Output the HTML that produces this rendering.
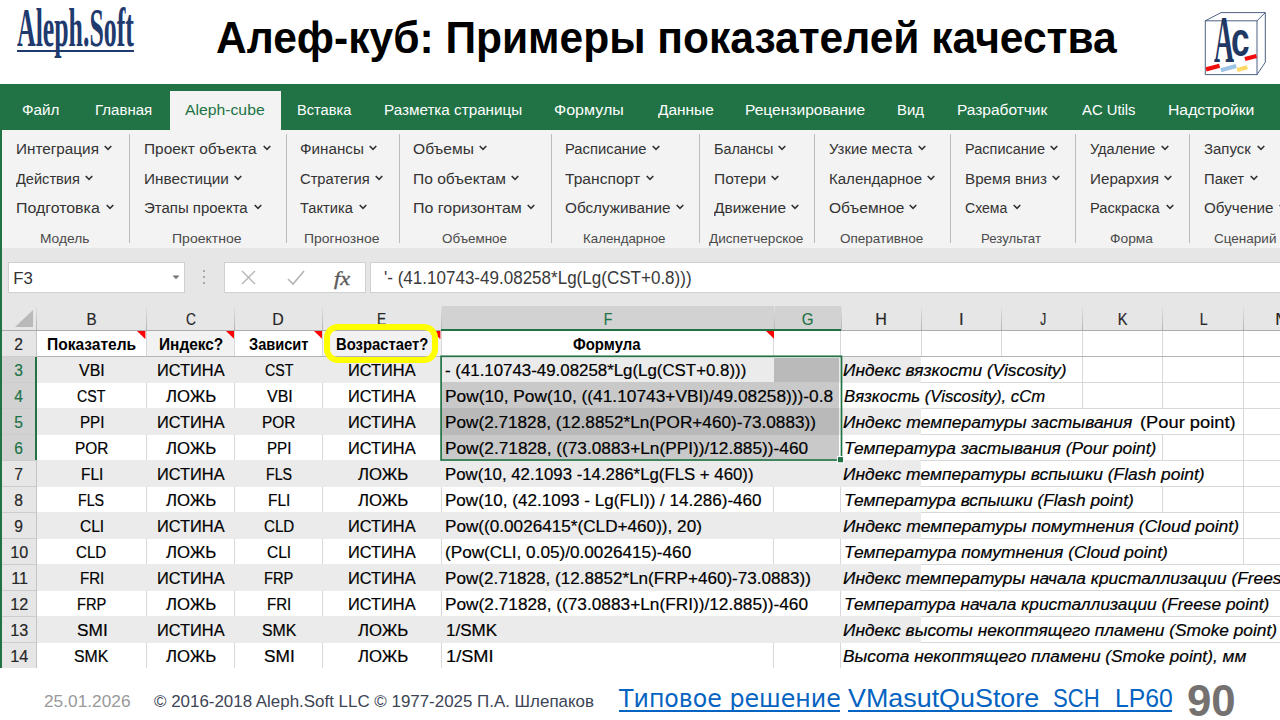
<!DOCTYPE html>
<html lang="ru"><head><meta charset="utf-8"><title>Алеф-куб: Примеры показателей качества</title>
<style>
html,body{margin:0;padding:0;background:#fff}
body{width:1280px;height:720px;position:relative;overflow:hidden;font-family:"Liberation Sans",sans-serif}
#s div,#s span,#s a,#s svg{position:absolute;display:block}
#s{position:absolute;left:0;top:0;width:1280px;height:720px;overflow:hidden}
.t{white-space:nowrap;line-height:1;transform-origin:0 0}
.c{transform-origin:50% 0}
</style></head><body><div id="s">
<div style="left:17px;top:50px;width:117px;height:2px;background:#1f3a6e;"></div>
<svg style="left:1195px;top:5px" width="80" height="78" viewBox="1195 5 80 78">
<g fill="none" stroke="#1f3864" stroke-width="0.8" stroke-linejoin="round">
<rect x="1205.3" y="20.8" width="51.7" height="53.8"/>
<path d="M1205.3 20.8 L1221 12.6 L1265.3 12.6 L1257 20.8 M1265.3 12.6 L1265.3 62.3 L1257 74.6"/>
</g>
<g transform="rotate(-15 1213 67.5)"><rect x="1205.8" y="65.4" width="14" height="4.2" fill="#f20d0d"/></g>
<g transform="rotate(-15 1228.5 68)"><rect x="1220.5" y="66" width="16" height="4.2" fill="#9dc3e6"/></g>
<g transform="rotate(-15 1242.3 68.5)"><rect x="1237" y="66.5" width="10.5" height="4.2" fill="#ffd966"/></g>
<g transform="rotate(-15 1250.7 57.5)"><rect x="1244.7" y="55.4" width="12" height="4.2" fill="#f20d0d"/></g>
</svg>
<div style="left:0px;top:84px;width:1280px;height:46px;background:#217346;"></div>
<div style="left:169.6px;top:91px;width:111.2px;height:39px;background:#f3f3f3;"></div>
<div style="left:0px;top:130px;width:1280px;height:118px;background:#f3f3f3;"></div>
<div style="left:0px;top:248px;width:1280px;height:58px;background:#e6e6e6;"></div>
<div style="left:0px;top:306px;width:1280px;height:362px;background:#fff;"></div>
<div style="left:0px;top:84px;width:2px;height:584px;background:#217346;"></div>
<svg style="left:103.8px;top:145px" width="8" height="6" viewBox="0 0 8 6"><path d="M0.7 1 L4 4.3 L7.3 1" fill="none" stroke="#333" stroke-width="1.6"/></svg>
<svg style="left:84.8px;top:174.5px" width="8" height="6" viewBox="0 0 8 6"><path d="M0.7 1 L4 4.3 L7.3 1" fill="none" stroke="#333" stroke-width="1.6"/></svg>
<svg style="left:105.8px;top:204px" width="8" height="6" viewBox="0 0 8 6"><path d="M0.7 1 L4 4.3 L7.3 1" fill="none" stroke="#333" stroke-width="1.6"/></svg>
<svg style="left:262.8px;top:145px" width="8" height="6" viewBox="0 0 8 6"><path d="M0.7 1 L4 4.3 L7.3 1" fill="none" stroke="#333" stroke-width="1.6"/></svg>
<svg style="left:233.8px;top:174.5px" width="8" height="6" viewBox="0 0 8 6"><path d="M0.7 1 L4 4.3 L7.3 1" fill="none" stroke="#333" stroke-width="1.6"/></svg>
<svg style="left:253.8px;top:204px" width="8" height="6" viewBox="0 0 8 6"><path d="M0.7 1 L4 4.3 L7.3 1" fill="none" stroke="#333" stroke-width="1.6"/></svg>
<svg style="left:368.8px;top:145px" width="8" height="6" viewBox="0 0 8 6"><path d="M0.7 1 L4 4.3 L7.3 1" fill="none" stroke="#333" stroke-width="1.6"/></svg>
<svg style="left:374.8px;top:174.5px" width="8" height="6" viewBox="0 0 8 6"><path d="M0.7 1 L4 4.3 L7.3 1" fill="none" stroke="#333" stroke-width="1.6"/></svg>
<svg style="left:358.8px;top:204px" width="8" height="6" viewBox="0 0 8 6"><path d="M0.7 1 L4 4.3 L7.3 1" fill="none" stroke="#333" stroke-width="1.6"/></svg>
<svg style="left:478.8px;top:145px" width="8" height="6" viewBox="0 0 8 6"><path d="M0.7 1 L4 4.3 L7.3 1" fill="none" stroke="#333" stroke-width="1.6"/></svg>
<svg style="left:510.8px;top:174.5px" width="8" height="6" viewBox="0 0 8 6"><path d="M0.7 1 L4 4.3 L7.3 1" fill="none" stroke="#333" stroke-width="1.6"/></svg>
<svg style="left:526.8px;top:204px" width="8" height="6" viewBox="0 0 8 6"><path d="M0.7 1 L4 4.3 L7.3 1" fill="none" stroke="#333" stroke-width="1.6"/></svg>
<svg style="left:651.8px;top:145px" width="8" height="6" viewBox="0 0 8 6"><path d="M0.7 1 L4 4.3 L7.3 1" fill="none" stroke="#333" stroke-width="1.6"/></svg>
<svg style="left:645.8px;top:174.5px" width="8" height="6" viewBox="0 0 8 6"><path d="M0.7 1 L4 4.3 L7.3 1" fill="none" stroke="#333" stroke-width="1.6"/></svg>
<svg style="left:675.8px;top:204px" width="8" height="6" viewBox="0 0 8 6"><path d="M0.7 1 L4 4.3 L7.3 1" fill="none" stroke="#333" stroke-width="1.6"/></svg>
<svg style="left:777.8px;top:145px" width="8" height="6" viewBox="0 0 8 6"><path d="M0.7 1 L4 4.3 L7.3 1" fill="none" stroke="#333" stroke-width="1.6"/></svg>
<svg style="left:770.8px;top:174.5px" width="8" height="6" viewBox="0 0 8 6"><path d="M0.7 1 L4 4.3 L7.3 1" fill="none" stroke="#333" stroke-width="1.6"/></svg>
<svg style="left:790.8px;top:204px" width="8" height="6" viewBox="0 0 8 6"><path d="M0.7 1 L4 4.3 L7.3 1" fill="none" stroke="#333" stroke-width="1.6"/></svg>
<svg style="left:917.8px;top:145px" width="8" height="6" viewBox="0 0 8 6"><path d="M0.7 1 L4 4.3 L7.3 1" fill="none" stroke="#333" stroke-width="1.6"/></svg>
<svg style="left:926.8px;top:174.5px" width="8" height="6" viewBox="0 0 8 6"><path d="M0.7 1 L4 4.3 L7.3 1" fill="none" stroke="#333" stroke-width="1.6"/></svg>
<svg style="left:909.3px;top:204px" width="8" height="6" viewBox="0 0 8 6"><path d="M0.7 1 L4 4.3 L7.3 1" fill="none" stroke="#333" stroke-width="1.6"/></svg>
<svg style="left:1049.8px;top:145px" width="8" height="6" viewBox="0 0 8 6"><path d="M0.7 1 L4 4.3 L7.3 1" fill="none" stroke="#333" stroke-width="1.6"/></svg>
<svg style="left:1051.8px;top:174.5px" width="8" height="6" viewBox="0 0 8 6"><path d="M0.7 1 L4 4.3 L7.3 1" fill="none" stroke="#333" stroke-width="1.6"/></svg>
<svg style="left:1012.8px;top:204px" width="8" height="6" viewBox="0 0 8 6"><path d="M0.7 1 L4 4.3 L7.3 1" fill="none" stroke="#333" stroke-width="1.6"/></svg>
<svg style="left:1160.8px;top:145px" width="8" height="6" viewBox="0 0 8 6"><path d="M0.7 1 L4 4.3 L7.3 1" fill="none" stroke="#333" stroke-width="1.6"/></svg>
<svg style="left:1163.8px;top:174.5px" width="8" height="6" viewBox="0 0 8 6"><path d="M0.7 1 L4 4.3 L7.3 1" fill="none" stroke="#333" stroke-width="1.6"/></svg>
<svg style="left:1165.8px;top:204px" width="8" height="6" viewBox="0 0 8 6"><path d="M0.7 1 L4 4.3 L7.3 1" fill="none" stroke="#333" stroke-width="1.6"/></svg>
<svg style="left:1256.8px;top:145px" width="8" height="6" viewBox="0 0 8 6"><path d="M0.7 1 L4 4.3 L7.3 1" fill="none" stroke="#333" stroke-width="1.6"/></svg>
<svg style="left:1249.8px;top:174.5px" width="8" height="6" viewBox="0 0 8 6"><path d="M0.7 1 L4 4.3 L7.3 1" fill="none" stroke="#333" stroke-width="1.6"/></svg>
<svg style="left:1278.8px;top:204px" width="8" height="6" viewBox="0 0 8 6"><path d="M0.7 1 L4 4.3 L7.3 1" fill="none" stroke="#333" stroke-width="1.6"/></svg>
<div style="left:128.6px;top:134px;width:1px;height:109px;background:#bcbcbc;"></div>
<div style="left:285.6px;top:134px;width:1px;height:109px;background:#bcbcbc;"></div>
<div style="left:398.6px;top:134px;width:1px;height:109px;background:#bcbcbc;"></div>
<div style="left:550.6px;top:134px;width:1px;height:109px;background:#bcbcbc;"></div>
<div style="left:698.6px;top:134px;width:1px;height:109px;background:#bcbcbc;"></div>
<div style="left:813.6px;top:134px;width:1px;height:109px;background:#bcbcbc;"></div>
<div style="left:949.6px;top:134px;width:1px;height:109px;background:#bcbcbc;"></div>
<div style="left:1075px;top:134px;width:1px;height:109px;background:#bcbcbc;"></div>
<div style="left:1189px;top:134px;width:1px;height:109px;background:#bcbcbc;"></div>
<div style="left:8px;top:262px;width:177px;height:31px;background:#fff;box-sizing:border-box;border:1px solid #d0d0d0"></div>
<div style="left:224px;top:262px;width:141.5px;height:31px;background:#fff;box-sizing:border-box;border:1px solid #d0d0d0"></div>
<div style="left:369.5px;top:262px;width:912px;height:31px;background:#fff;box-sizing:border-box;border:1px solid #d0d0d0"></div>
<svg style="left:172px;top:275px" width="8" height="5" viewBox="0 0 8 5"><path d="M0.5 0.5 L7.5 0.5 L4 4.3 Z" fill="#777"/></svg>
<div style="left:203px;top:270px;width:2px;height:2px;background:#aaa;"></div>
<div style="left:203px;top:276px;width:2px;height:2px;background:#aaa;"></div>
<div style="left:203px;top:282px;width:2px;height:2px;background:#aaa;"></div>
<svg style="left:240px;top:269px" width="18" height="18" viewBox="0 0 18 18"><path d="M2 2 L15 15 M15 2 L2 15" fill="none" stroke="#b4b4b4" stroke-width="1.4"/></svg>
<svg style="left:286px;top:269px" width="20" height="18" viewBox="0 0 20 18"><path d="M2 10 L7 15 L18 2" fill="none" stroke="#b4b4b4" stroke-width="1.6"/></svg>
<div style="left:2px;top:306px;width:1278px;height:24px;background:#e6e6e6;"></div>
<div style="left:441px;top:306px;width:400px;height:24px;background:#d2d2d2;"></div>
<div style="left:2px;top:329.7px;width:1278px;height:1px;background:#ababab;"></div>
<div style="left:145.5px;top:306px;width:1px;height:24px;background:#c4c4c4;background:linear-gradient(#e2e2e2,#b4b4b4)"></div>
<div style="left:234.0px;top:306px;width:1px;height:24px;background:#c4c4c4;background:linear-gradient(#e2e2e2,#b4b4b4)"></div>
<div style="left:322.0px;top:306px;width:1px;height:24px;background:#c4c4c4;background:linear-gradient(#e2e2e2,#b4b4b4)"></div>
<div style="left:440.5px;top:306px;width:1px;height:24px;background:#c4c4c4;background:linear-gradient(#e2e2e2,#b4b4b4)"></div>
<div style="left:774.0px;top:306px;width:1px;height:24px;background:#c4c4c4;background:linear-gradient(#e2e2e2,#b4b4b4)"></div>
<div style="left:840.5px;top:306px;width:1px;height:24px;background:#c4c4c4;background:linear-gradient(#e2e2e2,#b4b4b4)"></div>
<div style="left:920.9px;top:306px;width:1px;height:24px;background:#c4c4c4;background:linear-gradient(#e2e2e2,#b4b4b4)"></div>
<div style="left:1001.0px;top:306px;width:1px;height:24px;background:#c4c4c4;background:linear-gradient(#e2e2e2,#b4b4b4)"></div>
<div style="left:1081.8px;top:306px;width:1px;height:24px;background:#c4c4c4;background:linear-gradient(#e2e2e2,#b4b4b4)"></div>
<div style="left:1162.0px;top:306px;width:1px;height:24px;background:#c4c4c4;background:linear-gradient(#e2e2e2,#b4b4b4)"></div>
<div style="left:1242.7px;top:306px;width:1px;height:24px;background:#c4c4c4;background:linear-gradient(#e2e2e2,#b4b4b4)"></div>
<div style="left:1329.5px;top:306px;width:1px;height:24px;background:#c4c4c4;background:linear-gradient(#e2e2e2,#b4b4b4)"></div>
<div style="left:36.2px;top:306px;width:1px;height:24px;background:#c4c4c4;background:linear-gradient(#e2e2e2,#b4b4b4)"></div>
<svg style="left:14px;top:309px" width="20" height="19" viewBox="0 0 20 19"><path d="M19 1 L19 18 L1 18 Z" fill="#b9b9b9"/></svg>
<div style="left:441px;top:329px;width:400px;height:2px;background:#217346;"></div>
<div style="left:2px;top:331px;width:34.5px;height:337px;background:#e6e6e6;"></div>
<div style="left:2px;top:356.5px;width:33px;height:103.5px;background:#d2d2d2;"></div>
<div style="left:2px;top:355.5px;width:34px;height:1px;background:#cdcdcd;"></div>
<div style="left:2px;top:381.5px;width:34px;height:1px;background:#cdcdcd;"></div>
<div style="left:2px;top:407.5px;width:34px;height:1px;background:#cdcdcd;"></div>
<div style="left:2px;top:433.5px;width:34px;height:1px;background:#cdcdcd;"></div>
<div style="left:2px;top:459.5px;width:34px;height:1px;background:#cdcdcd;"></div>
<div style="left:2px;top:485.5px;width:34px;height:1px;background:#cdcdcd;"></div>
<div style="left:2px;top:511.5px;width:34px;height:1px;background:#cdcdcd;"></div>
<div style="left:2px;top:537.5px;width:34px;height:1px;background:#cdcdcd;"></div>
<div style="left:2px;top:563.5px;width:34px;height:1px;background:#cdcdcd;"></div>
<div style="left:2px;top:589.5px;width:34px;height:1px;background:#cdcdcd;"></div>
<div style="left:2px;top:615.5px;width:34px;height:1px;background:#cdcdcd;"></div>
<div style="left:2px;top:641.5px;width:34px;height:1px;background:#cdcdcd;"></div>
<div style="left:2px;top:667.5px;width:34px;height:1px;background:#cdcdcd;"></div>
<div style="left:36px;top:331px;width:1px;height:337px;background:#c4c4c4;"></div>
<div style="left:35px;top:356.5px;width:1.8px;height:103.5px;background:#217346;"></div>
<div style="left:921px;top:381.5px;width:359px;height:1px;background:#d8d8d8;"></div>
<div style="left:921px;top:407.5px;width:359px;height:1px;background:#d8d8d8;"></div>
<div style="left:921px;top:433.5px;width:359px;height:1px;background:#d8d8d8;"></div>
<div style="left:921px;top:459.5px;width:359px;height:1px;background:#d8d8d8;"></div>
<div style="left:921px;top:485.5px;width:359px;height:1px;background:#d8d8d8;"></div>
<div style="left:921px;top:511.5px;width:359px;height:1px;background:#d8d8d8;"></div>
<div style="left:921px;top:537.5px;width:359px;height:1px;background:#d8d8d8;"></div>
<div style="left:921px;top:563.5px;width:359px;height:1px;background:#d8d8d8;"></div>
<div style="left:921px;top:589.5px;width:359px;height:1px;background:#d8d8d8;"></div>
<div style="left:921px;top:615.5px;width:359px;height:1px;background:#d8d8d8;"></div>
<div style="left:921px;top:641.5px;width:359px;height:1px;background:#d8d8d8;"></div>
<div style="left:36.7px;top:356px;width:884.7px;height:27px;background:#ebebeb;"></div>
<div style="left:36.7px;top:408px;width:884.7px;height:27px;background:#ebebeb;"></div>
<div style="left:36.7px;top:460px;width:884.7px;height:27px;background:#ebebeb;"></div>
<div style="left:36.7px;top:512px;width:884.7px;height:27px;background:#ebebeb;"></div>
<div style="left:36.7px;top:564px;width:884.7px;height:27px;background:#ebebeb;"></div>
<div style="left:36.7px;top:616px;width:884.7px;height:27px;background:#ebebeb;"></div>
<div style="left:146.5px;top:331px;width:87.5px;height:24.5px;background:#f2f2f2;"></div>
<div style="left:323px;top:331px;width:117.5px;height:24.5px;background:#f2f2f2;"></div>
<div style="left:145.5px;top:331px;width:1px;height:24.5px;background:#d8d8d8;"></div>
<div style="left:234.0px;top:331px;width:1px;height:24.5px;background:#d8d8d8;"></div>
<div style="left:322.0px;top:331px;width:1px;height:24.5px;background:#d8d8d8;"></div>
<div style="left:440.5px;top:331px;width:1px;height:24.5px;background:#d8d8d8;"></div>
<div style="left:773.0px;top:331px;width:1px;height:24.5px;background:#d8d8d8;"></div>
<div style="left:840.0px;top:331px;width:1px;height:24.5px;background:#d8d8d8;"></div>
<div style="left:920.9px;top:331px;width:1px;height:24.5px;background:#d8d8d8;"></div>
<div style="left:1001.0px;top:331px;width:1px;height:24.5px;background:#d8d8d8;"></div>
<div style="left:1081.8px;top:331px;width:1px;height:24.5px;background:#d8d8d8;"></div>
<div style="left:1162.0px;top:331px;width:1px;height:24.5px;background:#d8d8d8;"></div>
<div style="left:1242.7px;top:331px;width:1px;height:24.5px;background:#d8d8d8;"></div>
<div style="left:1081.8px;top:356px;width:1px;height:26px;background:#d8d8d8;"></div>
<div style="left:1162.0px;top:356px;width:1px;height:26px;background:#d8d8d8;"></div>
<div style="left:1242.7px;top:356px;width:1px;height:26px;background:#d8d8d8;"></div>
<div style="left:145.5px;top:383px;width:1px;height:25px;background:#d8d8d8;"></div>
<div style="left:234.0px;top:383px;width:1px;height:25px;background:#d8d8d8;"></div>
<div style="left:322.0px;top:383px;width:1px;height:25px;background:#d8d8d8;"></div>
<div style="left:440.5px;top:383px;width:1px;height:25px;background:#d8d8d8;"></div>
<div style="left:1081.8px;top:382px;width:1px;height:26px;background:#d8d8d8;"></div>
<div style="left:1162.0px;top:382px;width:1px;height:26px;background:#d8d8d8;"></div>
<div style="left:1242.7px;top:382px;width:1px;height:26px;background:#d8d8d8;"></div>
<div style="left:1242.7px;top:408px;width:1px;height:26px;background:#d8d8d8;"></div>
<div style="left:145.5px;top:435px;width:1px;height:25px;background:#d8d8d8;"></div>
<div style="left:234.0px;top:435px;width:1px;height:25px;background:#d8d8d8;"></div>
<div style="left:322.0px;top:435px;width:1px;height:25px;background:#d8d8d8;"></div>
<div style="left:440.5px;top:435px;width:1px;height:25px;background:#d8d8d8;"></div>
<div style="left:1162.0px;top:434px;width:1px;height:26px;background:#d8d8d8;"></div>
<div style="left:1242.7px;top:434px;width:1px;height:26px;background:#d8d8d8;"></div>
<div style="left:1242.7px;top:460px;width:1px;height:26px;background:#d8d8d8;"></div>
<div style="left:145.5px;top:487px;width:1px;height:25px;background:#d8d8d8;"></div>
<div style="left:234.0px;top:487px;width:1px;height:25px;background:#d8d8d8;"></div>
<div style="left:322.0px;top:487px;width:1px;height:25px;background:#d8d8d8;"></div>
<div style="left:440.5px;top:487px;width:1px;height:25px;background:#d8d8d8;"></div>
<div style="left:773.0px;top:487px;width:1px;height:25px;background:#d8d8d8;"></div>
<div style="left:840.0px;top:487px;width:1px;height:25px;background:#d8d8d8;"></div>
<div style="left:1162.0px;top:486px;width:1px;height:26px;background:#d8d8d8;"></div>
<div style="left:1242.7px;top:486px;width:1px;height:26px;background:#d8d8d8;"></div>
<div style="left:1242.7px;top:512px;width:1px;height:26px;background:#d8d8d8;"></div>
<div style="left:145.5px;top:539px;width:1px;height:25px;background:#d8d8d8;"></div>
<div style="left:234.0px;top:539px;width:1px;height:25px;background:#d8d8d8;"></div>
<div style="left:322.0px;top:539px;width:1px;height:25px;background:#d8d8d8;"></div>
<div style="left:440.5px;top:539px;width:1px;height:25px;background:#d8d8d8;"></div>
<div style="left:773.0px;top:539px;width:1px;height:25px;background:#d8d8d8;"></div>
<div style="left:840.0px;top:539px;width:1px;height:25px;background:#d8d8d8;"></div>
<div style="left:1242.7px;top:538px;width:1px;height:26px;background:#d8d8d8;"></div>
<div style="left:145.5px;top:591px;width:1px;height:25px;background:#d8d8d8;"></div>
<div style="left:234.0px;top:591px;width:1px;height:25px;background:#d8d8d8;"></div>
<div style="left:322.0px;top:591px;width:1px;height:25px;background:#d8d8d8;"></div>
<div style="left:440.5px;top:591px;width:1px;height:25px;background:#d8d8d8;"></div>
<div style="left:840.0px;top:591px;width:1px;height:25px;background:#d8d8d8;"></div>
<div style="left:145.5px;top:643px;width:1px;height:25px;background:#d8d8d8;"></div>
<div style="left:234.0px;top:643px;width:1px;height:25px;background:#d8d8d8;"></div>
<div style="left:322.0px;top:643px;width:1px;height:25px;background:#d8d8d8;"></div>
<div style="left:440.5px;top:643px;width:1px;height:25px;background:#d8d8d8;"></div>
<div style="left:773.0px;top:643px;width:1px;height:25px;background:#d8d8d8;"></div>
<div style="left:840.0px;top:643px;width:1px;height:25px;background:#d8d8d8;"></div>
<div style="left:36.7px;top:355.7px;width:1244px;height:1px;background:#b4b4b4;"></div>
<div style="left:441px;top:382px;width:398px;height:26px;background:#c9c9c9;"></div>
<div style="left:441px;top:408px;width:398px;height:27px;background:#b9b9b9;"></div>
<div style="left:441px;top:435px;width:398px;height:24px;background:#c9c9c9;"></div>
<div style="left:774px;top:358px;width:65px;height:24px;background:#bababa;"></div>
<svg style="left:436px;top:352px" width="412" height="114" viewBox="436 352 412 114"><rect x="441.1" y="356.3" width="400.4" height="103.7" fill="none" stroke="#217346" stroke-width="1.7"/><rect x="837.4" y="456.6" width="6.2" height="6.2" fill="#217346" stroke="#fff" stroke-width="1"/></svg>
<svg style="left:137.4px;top:330.6px" width="8.4" height="8.2" viewBox="0 0 8.4 8.2"><path d="M0 0 L8.4 0 L8.4 8.2 Z" fill="#ff0000"/></svg>
<svg style="left:225.9px;top:330.6px" width="8.4" height="8.2" viewBox="0 0 8.4 8.2"><path d="M0 0 L8.4 0 L8.4 8.2 Z" fill="#ff0000"/></svg>
<svg style="left:313.8px;top:330.6px" width="8.4" height="8.2" viewBox="0 0 8.4 8.2"><path d="M0 0 L8.4 0 L8.4 8.2 Z" fill="#ff0000"/></svg>
<svg style="left:432.20000000000005px;top:330.6px" width="8.4" height="8.2" viewBox="0 0 8.4 8.2"><path d="M0 0 L8.4 0 L8.4 8.2 Z" fill="#ff0000"/></svg>
<svg style="left:765.5px;top:330.6px" width="8.4" height="8.2" viewBox="0 0 8.4 8.2"><path d="M0 0 L8.4 0 L8.4 8.2 Z" fill="#ff0000"/></svg>
<div style="left:0px;top:668px;width:1280px;height:52px;background:#fff;"></div>
<div style="left:619px;top:710px;width:221px;height:1.6px;background:#0563c1;"></div>
<div style="left:848px;top:710px;width:324px;height:1.6px;background:#0563c1;"></div>
<span class="t" style="font:700 55px 'Liberation Serif', serif;line-height:1;color:#1f3a6e;left:16.87px;top:-0.4px;transform:scaleX(0.4693);">Aleph.Soft</span>
<span class="t" style="font:700 42.6px 'Liberation Sans', sans-serif;line-height:1;color:#000;left:216.00px;top:16.8px;transform-origin:0 36.00px;transform:scale(0.9986,1.06);">Алеф-куб: Примеры показателей качества</span>
<span class="t" style="font:700 68.2px 'Liberation Serif', serif;line-height:1;color:#1f3864;left:1214.20px;top:5px;transform:scaleX(0.4062);">A</span>
<span class="t" style="font:700 49px 'Liberation Sans', sans-serif;line-height:1;color:#1f3864;left:1230.94px;top:15px;transform:scaleX(0.6821);">c</span>
<span class="t" style="font:400 15.1px 'Liberation Sans', sans-serif;line-height:1;color:#fff;left:21.74px;top:102px;transform:scaleX(1.0071);">Файл</span>
<span class="t" style="font:400 15.1px 'Liberation Sans', sans-serif;line-height:1;color:#fff;left:94.76px;top:102px;transform:scaleX(0.9955);">Главная</span>
<span class="t" style="font:400 15.1px 'Liberation Sans', sans-serif;line-height:1;color:#217346;left:185.00px;top:102px;transform:scaleX(1.0429);">Aleph-cube</span>
<span class="t" style="font:400 15.1px 'Liberation Sans', sans-serif;line-height:1;color:#fff;left:296.79px;top:102px;transform:scaleX(0.9680);">Вставка</span>
<span class="t" style="font:400 15.1px 'Liberation Sans', sans-serif;line-height:1;color:#fff;left:383.74px;top:102px;transform:scaleX(1.0093);">Разметка страницы</span>
<span class="t" style="font:400 15.1px 'Liberation Sans', sans-serif;line-height:1;color:#fff;left:554.20px;top:102px;transform:scaleX(1.0625);">Формулы</span>
<span class="t" style="font:400 15.1px 'Liberation Sans', sans-serif;line-height:1;color:#fff;left:657.50px;top:102px;transform:scaleX(1.0233);">Данные</span>
<span class="t" style="font:400 15.1px 'Liberation Sans', sans-serif;line-height:1;color:#fff;left:744.71px;top:102px;transform:scaleX(1.0306);">Рецензирование</span>
<span class="t" style="font:400 15.1px 'Liberation Sans', sans-serif;line-height:1;color:#fff;left:897.26px;top:102px;transform:scaleX(0.9903);">Вид</span>
<span class="t" style="font:400 15.1px 'Liberation Sans', sans-serif;line-height:1;color:#fff;left:957.22px;top:102px;transform:scaleX(1.0259);">Разработчик</span>
<span class="t" style="font:400 15.1px 'Liberation Sans', sans-serif;line-height:1;color:#fff;left:1082.00px;top:102px;transform:scaleX(0.9815);">AC Utils</span>
<span class="t" style="font:400 15.1px 'Liberation Sans', sans-serif;line-height:1;color:#fff;left:1168.20px;top:102px;transform:scaleX(1.0435);">Надстройки</span>
<span class="t" style="font:400 15.2px 'Liberation Sans', sans-serif;line-height:1;color:#333;left:16.30px;top:141px;transform:scaleX(1.0068);">Интеграция</span>
<span class="t" style="font:400 15.2px 'Liberation Sans', sans-serif;line-height:1;color:#333;left:16.30px;top:170.5px;transform:scaleX(0.9588);">Действия</span>
<span class="t" style="font:400 15.2px 'Liberation Sans', sans-serif;line-height:1;color:#333;left:16.30px;top:200px;transform:scaleX(1.0475);">Подготовка</span>
<span class="t" style="font:400 15.2px 'Liberation Sans', sans-serif;line-height:1;color:#333;left:144.30px;top:141px;transform:scaleX(1.0162);">Проект объекта</span>
<span class="t" style="font:400 15.2px 'Liberation Sans', sans-serif;line-height:1;color:#333;left:144.30px;top:170.5px;transform:scaleX(1.0066);">Инвестиции</span>
<span class="t" style="font:400 15.2px 'Liberation Sans', sans-serif;line-height:1;color:#333;left:144.30px;top:200px;transform:scaleX(0.9862);">Этапы проекта</span>
<span class="t" style="font:400 15.2px 'Liberation Sans', sans-serif;line-height:1;color:#333;left:300.30px;top:141px;transform:scaleX(1.0008);">Финансы</span>
<span class="t" style="font:400 15.2px 'Liberation Sans', sans-serif;line-height:1;color:#333;left:300.30px;top:170.5px;transform:scaleX(0.9690);">Стратегия</span>
<span class="t" style="font:400 15.2px 'Liberation Sans', sans-serif;line-height:1;color:#333;left:300.30px;top:200px;transform:scaleX(0.9644);">Тактика</span>
<span class="t" style="font:400 15.2px 'Liberation Sans', sans-serif;line-height:1;color:#333;left:413.30px;top:141px;transform:scaleX(1.0266);">Объемы</span>
<span class="t" style="font:400 15.2px 'Liberation Sans', sans-serif;line-height:1;color:#333;left:413.30px;top:170.5px;transform:scaleX(1.0257);">По объектам</span>
<span class="t" style="font:400 15.2px 'Liberation Sans', sans-serif;line-height:1;color:#333;left:413.30px;top:200px;transform:scaleX(1.0517);">По горизонтам</span>
<span class="t" style="font:400 15.2px 'Liberation Sans', sans-serif;line-height:1;color:#333;left:565.30px;top:141px;transform:scaleX(0.9735);">Расписание</span>
<span class="t" style="font:400 15.2px 'Liberation Sans', sans-serif;line-height:1;color:#333;left:565.30px;top:170.5px;transform:scaleX(1.0282);">Транспорт</span>
<span class="t" style="font:400 15.2px 'Liberation Sans', sans-serif;line-height:1;color:#333;left:565.30px;top:200px;transform:scaleX(1.0053);">Обслуживание</span>
<span class="t" style="font:400 15.2px 'Liberation Sans', sans-serif;line-height:1;color:#333;left:713.80px;top:141px;transform:scaleX(0.9480);">Балансы</span>
<span class="t" style="font:400 15.2px 'Liberation Sans', sans-serif;line-height:1;color:#333;left:713.80px;top:170.5px;transform:scaleX(1.0209);">Потери</span>
<span class="t" style="font:400 15.2px 'Liberation Sans', sans-serif;line-height:1;color:#333;left:713.80px;top:200px;transform:scaleX(1.0186);">Движение</span>
<span class="t" style="font:400 15.2px 'Liberation Sans', sans-serif;line-height:1;color:#333;left:828.80px;top:141px;transform:scaleX(0.9771);">Узкие места</span>
<span class="t" style="font:400 15.2px 'Liberation Sans', sans-serif;line-height:1;color:#333;left:828.80px;top:170.5px;transform:scaleX(0.9898);">Календарное</span>
<span class="t" style="font:400 15.2px 'Liberation Sans', sans-serif;line-height:1;color:#333;left:828.80px;top:200px;transform:scaleX(1.0247);">Объемное</span>
<span class="t" style="font:400 15.2px 'Liberation Sans', sans-serif;line-height:1;color:#333;left:964.80px;top:141px;transform:scaleX(0.9554);">Расписание</span>
<span class="t" style="font:400 15.2px 'Liberation Sans', sans-serif;line-height:1;color:#333;left:964.80px;top:170.5px;transform:scaleX(1.0006);">Время вниз</span>
<span class="t" style="font:400 15.2px 'Liberation Sans', sans-serif;line-height:1;color:#333;left:964.80px;top:200px;transform:scaleX(0.9246);">Схема</span>
<span class="t" style="font:400 15.2px 'Liberation Sans', sans-serif;line-height:1;color:#333;left:1090.30px;top:141px;transform:scaleX(0.9565);">Удаление</span>
<span class="t" style="font:400 15.2px 'Liberation Sans', sans-serif;line-height:1;color:#333;left:1090.30px;top:170.5px;transform:scaleX(1.0007);">Иерархия</span>
<span class="t" style="font:400 15.2px 'Liberation Sans', sans-serif;line-height:1;color:#333;left:1090.30px;top:200px;transform:scaleX(0.9661);">Раскраска</span>
<span class="t" style="font:400 15.2px 'Liberation Sans', sans-serif;line-height:1;color:#333;left:1204.30px;top:141px;transform:scaleX(0.9853);">Запуск</span>
<span class="t" style="font:400 15.2px 'Liberation Sans', sans-serif;line-height:1;color:#333;left:1204.30px;top:170.5px;transform:scaleX(0.9767);">Пакет</span>
<span class="t" style="font:400 15.2px 'Liberation Sans', sans-serif;line-height:1;color:#333;left:1204.30px;top:200px;transform:scaleX(1.0007);">Обучение</span>
<span class="t" style="font:400 13.4px 'Liberation Sans', sans-serif;line-height:1;color:#4a4a4a;left:40.37px;top:232.4px;transform:scaleX(1.0280);">Модель</span>
<span class="t" style="font:400 13.4px 'Liberation Sans', sans-serif;line-height:1;color:#4a4a4a;left:172.35px;top:232.4px;transform:scaleX(1.0471);">Проектное</span>
<span class="t" style="font:400 13.4px 'Liberation Sans', sans-serif;line-height:1;color:#4a4a4a;left:304.36px;top:232.4px;transform:scaleX(1.0394);">Прогнозное</span>
<span class="t" style="font:400 13.4px 'Liberation Sans', sans-serif;line-height:1;color:#4a4a4a;left:441.90px;top:232.4px;transform:scaleX(1.0008);">Объемное</span>
<span class="t" style="font:400 13.4px 'Liberation Sans', sans-serif;line-height:1;color:#4a4a4a;left:583.41px;top:232.4px;transform:scaleX(0.9945);">Календарное</span>
<span class="t" style="font:400 13.4px 'Liberation Sans', sans-serif;line-height:1;color:#4a4a4a;left:709.40px;top:232.4px;transform:scaleX(1.0141);">Диспетчерское</span>
<span class="t" style="font:400 13.4px 'Liberation Sans', sans-serif;line-height:1;color:#4a4a4a;left:839.90px;top:232.4px;transform:scaleX(1.0067);">Оперативное</span>
<span class="t" style="font:400 13.4px 'Liberation Sans', sans-serif;line-height:1;color:#4a4a4a;left:981.42px;top:232.4px;transform:scaleX(0.9841);">Результат</span>
<span class="t" style="font:400 13.4px 'Liberation Sans', sans-serif;line-height:1;color:#4a4a4a;left:1109.63px;top:232.4px;transform:scaleX(1.0317);">Форма</span>
<span class="t" style="font:400 13.4px 'Liberation Sans', sans-serif;line-height:1;color:#4a4a4a;left:1213.64px;top:232.4px;transform:scaleX(1.0091);">Сценарий</span>
<span class="t" style="font:400 16.8px 'Liberation Sans', sans-serif;line-height:1;color:#333;left:13.25px;top:271px;">F3</span>
<span class="t" style="font:italic 400 19px 'Liberation Serif', serif;line-height:1;color:#5a5a5a;-webkit-text-stroke:0.35px #5a5a5a;left:333.71px;top:268.5px;transform:scaleX(1.1698);">fx</span>
<span class="t" style="font:400 16.8px 'Liberation Sans', sans-serif;line-height:1;color:#3a3a3a;left:383.54px;top:271.2px;transform-origin:0 13.00px;transform:scale(1.0148,1.05);">&#x27;- (41.10743-49.08258*Lg(Lg(CST+0.8)))</span>
<span class="t c" style="font:400 16.8px 'Liberation Sans', sans-serif;line-height:1;color:#262626;-webkit-text-stroke:0.2px #262626;left:85.86px;top:312.2px;transform:scaleX(0.9064);">B</span>
<span class="t c" style="font:400 16.8px 'Liberation Sans', sans-serif;line-height:1;color:#262626;-webkit-text-stroke:0.2px #262626;left:185.19px;top:312.2px;transform:scaleX(0.8204);">C</span>
<span class="t c" style="font:400 16.8px 'Liberation Sans', sans-serif;line-height:1;color:#262626;-webkit-text-stroke:0.2px #262626;left:272.26px;top:312.2px;transform:scaleX(0.9466);">D</span>
<span class="t c" style="font:400 16.8px 'Liberation Sans', sans-serif;line-height:1;color:#262626;-webkit-text-stroke:0.2px #262626;left:375.98px;top:312.2px;transform:scaleX(0.8131);">E</span>
<span class="t c" style="font:400 16.8px 'Liberation Sans', sans-serif;line-height:1;color:#217346;-webkit-text-stroke:0.2px #217346;left:602.66px;top:312.2px;transform:scaleX(0.8348);">F</span>
<span class="t c" style="font:400 16.8px 'Liberation Sans', sans-serif;line-height:1;color:#217346;-webkit-text-stroke:0.2px #217346;left:800.92px;top:312.2px;transform:scaleX(0.9013);">G</span>
<span class="t c" style="font:400 16.8px 'Liberation Sans', sans-serif;line-height:1;color:#262626;-webkit-text-stroke:0.2px #262626;left:874.60px;top:312.2px;transform:scaleX(0.9589);">H</span>
<span class="t c" style="font:400 16.8px 'Liberation Sans', sans-serif;line-height:1;color:#262626;-webkit-text-stroke:0.2px #262626;left:959.02px;top:312.2px;transform:scaleX(1.0074);">I</span>
<span class="t c" style="font:400 16.8px 'Liberation Sans', sans-serif;line-height:1;color:#262626;-webkit-text-stroke:0.2px #262626;left:1038.92px;top:312.2px;transform:scaleX(0.7090);">J</span>
<span class="t c" style="font:400 16.8px 'Liberation Sans', sans-serif;line-height:1;color:#262626;-webkit-text-stroke:0.2px #262626;left:1116.54px;top:312.2px;transform:scaleX(0.8664);">K</span>
<span class="t c" style="font:400 16.8px 'Liberation Sans', sans-serif;line-height:1;color:#262626;-webkit-text-stroke:0.2px #262626;left:1198.75px;top:312.2px;transform:scaleX(0.8395);">L</span>
<span class="t" style="font:400 16.8px 'Liberation Sans', sans-serif;line-height:1;color:#262626;left:1275.07px;top:312.2px;transform:scaleX(1.1407);">M</span>
<span class="t c" style="font:400 16.8px 'Liberation Sans', sans-serif;line-height:1;color:#262626;-webkit-text-stroke:0.2px #262626;left:14.07px;top:336.8px;transform:scaleX(0.9300);">2</span>
<span class="t c" style="font:400 16.8px 'Liberation Sans', sans-serif;line-height:1;color:#217346;-webkit-text-stroke:0.2px #217346;left:14.07px;top:362.8px;transform:scaleX(0.9300);">3</span>
<span class="t c" style="font:400 16.8px 'Liberation Sans', sans-serif;line-height:1;color:#217346;-webkit-text-stroke:0.2px #217346;left:14.19px;top:388.8px;transform:scaleX(0.9300);">4</span>
<span class="t c" style="font:400 16.8px 'Liberation Sans', sans-serif;line-height:1;color:#217346;-webkit-text-stroke:0.2px #217346;left:13.96px;top:414.8px;transform:scaleX(0.9300);">5</span>
<span class="t c" style="font:400 16.8px 'Liberation Sans', sans-serif;line-height:1;color:#217346;-webkit-text-stroke:0.2px #217346;left:14.07px;top:440.8px;transform:scaleX(0.9300);">6</span>
<span class="t c" style="font:400 16.8px 'Liberation Sans', sans-serif;line-height:1;color:#262626;-webkit-text-stroke:0.2px #262626;left:14.07px;top:466.8px;transform:scaleX(0.9300);">7</span>
<span class="t c" style="font:400 16.8px 'Liberation Sans', sans-serif;line-height:1;color:#262626;-webkit-text-stroke:0.2px #262626;left:14.07px;top:492.8px;transform:scaleX(0.9300);">8</span>
<span class="t c" style="font:400 16.8px 'Liberation Sans', sans-serif;line-height:1;color:#262626;-webkit-text-stroke:0.2px #262626;left:14.07px;top:518.8px;transform:scaleX(0.9300);">9</span>
<span class="t c" style="font:400 16.8px 'Liberation Sans', sans-serif;line-height:1;color:#262626;-webkit-text-stroke:0.2px #262626;left:9.79px;top:544.8px;transform:scaleX(0.9650);">10</span>
<span class="t c" style="font:400 16.8px 'Liberation Sans', sans-serif;line-height:1;color:#262626;-webkit-text-stroke:0.2px #262626;left:10.53px;top:570.8px;transform:scaleX(0.9650);">11</span>
<span class="t c" style="font:400 16.8px 'Liberation Sans', sans-serif;line-height:1;color:#262626;-webkit-text-stroke:0.2px #262626;left:9.91px;top:596.8px;transform:scaleX(0.9650);">12</span>
<span class="t c" style="font:400 16.8px 'Liberation Sans', sans-serif;line-height:1;color:#262626;-webkit-text-stroke:0.2px #262626;left:9.79px;top:622.8px;transform:scaleX(0.9650);">13</span>
<span class="t c" style="font:400 16.8px 'Liberation Sans', sans-serif;line-height:1;color:#262626;-webkit-text-stroke:0.2px #262626;left:9.66px;top:648.8px;transform:scaleX(0.9650);">14</span>
<span class="t" style="font:700 15.6px 'Liberation Sans', sans-serif;line-height:1;color:#000;left:46.80px;top:336.8px;transform:scaleX(0.9972);">Показатель</span>
<span class="t" style="font:700 15.6px 'Liberation Sans', sans-serif;line-height:1;color:#000;left:158.51px;top:336.8px;transform:scaleX(0.9881);">Индекс?</span>
<span class="t" style="font:700 15.6px 'Liberation Sans', sans-serif;line-height:1;color:#000;left:248.53px;top:336.8px;transform:scaleX(0.9360);">Зависит</span>
<span class="t" style="font:700 15.6px 'Liberation Sans', sans-serif;line-height:1;color:#000;left:336.05px;top:336.8px;transform:scaleX(0.9501);">Возрастает?</span>
<span class="t" style="font:700 15.6px 'Liberation Sans', sans-serif;line-height:1;color:#000;left:573.27px;top:336.8px;transform:scaleX(0.9573);">Формула</span>
<span class="t" style="font:400 16.8px 'Liberation Sans', sans-serif;line-height:1;color:#000;-webkit-text-stroke:0.2px #000;left:79.47px;top:362.7px;transform:scaleX(0.9510);">VBI</span>
<span class="t" style="font:400 16.8px 'Liberation Sans', sans-serif;line-height:1;color:#000;-webkit-text-stroke:0.2px #000;left:156.58px;top:362.7px;transform:scaleX(0.9765);">ИСТИНА</span>
<span class="t" style="font:400 16.8px 'Liberation Sans', sans-serif;line-height:1;color:#000;-webkit-text-stroke:0.2px #000;left:264.52px;top:362.7px;transform:scaleX(0.8462);">CST</span>
<span class="t" style="font:400 16.8px 'Liberation Sans', sans-serif;line-height:1;color:#000;-webkit-text-stroke:0.2px #000;left:347.88px;top:362.7px;transform:scaleX(0.9765);">ИСТИНА</span>
<span class="t" style="font:400 16.8px 'Liberation Sans', sans-serif;line-height:1;color:#000;-webkit-text-stroke:0.2px #000;left:444.65px;top:362.7px;transform:scaleX(1.0045);">- (41.10743-49.08258*Lg(Lg(CST+0.8)))</span>
<span class="t" style="font:italic 400 16.8px 'Liberation Sans', sans-serif;line-height:1;color:#000;-webkit-text-stroke:0.2px #000;left:843.48px;top:362.7px;transform:scaleX(1.0326);">Индекс вязкости (Viscosity)</span>
<span class="t" style="font:400 16.8px 'Liberation Sans', sans-serif;line-height:1;color:#000;-webkit-text-stroke:0.2px #000;left:77.22px;top:388.7px;transform:scaleX(0.8462);">CST</span>
<span class="t" style="font:400 16.8px 'Liberation Sans', sans-serif;line-height:1;color:#000;-webkit-text-stroke:0.2px #000;left:166.40px;top:388.7px;transform:scaleX(0.9990);">ЛОЖЬ</span>
<span class="t" style="font:400 16.8px 'Liberation Sans', sans-serif;line-height:1;color:#000;-webkit-text-stroke:0.2px #000;left:266.77px;top:388.7px;transform:scaleX(0.9510);">VBI</span>
<span class="t" style="font:400 16.8px 'Liberation Sans', sans-serif;line-height:1;color:#000;-webkit-text-stroke:0.2px #000;left:347.88px;top:388.7px;transform:scaleX(0.9765);">ИСТИНА</span>
<span class="t" style="font:400 16.8px 'Liberation Sans', sans-serif;line-height:1;color:#000;-webkit-text-stroke:0.2px #000;left:445.01px;top:388.7px;transform:scaleX(1.0312);">Pow(10, Pow(10, ((41.10743+VBI)/49.08258)))-0.8</span>
<span class="t" style="font:italic 400 16.8px 'Liberation Sans', sans-serif;line-height:1;color:#000;-webkit-text-stroke:0.2px #000;left:843.50px;top:388.7px;transform:scaleX(0.9963);">Вязкость (Viscosity), cCm</span>
<span class="t" style="font:400 16.8px 'Liberation Sans', sans-serif;line-height:1;color:#000;-webkit-text-stroke:0.2px #000;left:79.52px;top:414.7px;transform:scaleX(0.9031);">PPI</span>
<span class="t" style="font:400 16.8px 'Liberation Sans', sans-serif;line-height:1;color:#000;-webkit-text-stroke:0.2px #000;left:156.58px;top:414.7px;transform:scaleX(0.9765);">ИСТИНА</span>
<span class="t" style="font:400 16.8px 'Liberation Sans', sans-serif;line-height:1;color:#000;-webkit-text-stroke:0.2px #000;left:262.05px;top:414.7px;transform:scaleX(0.9168);">POR</span>
<span class="t" style="font:400 16.8px 'Liberation Sans', sans-serif;line-height:1;color:#000;-webkit-text-stroke:0.2px #000;left:347.88px;top:414.7px;transform:scaleX(0.9765);">ИСТИНА</span>
<span class="t" style="font:400 16.8px 'Liberation Sans', sans-serif;line-height:1;color:#000;-webkit-text-stroke:0.2px #000;left:445.02px;top:414.7px;transform:scaleX(1.0235);">Pow(2.71828, (12.8852*Ln(POR+460)-73.0883))</span>
<span class="t" style="font:italic 400 16.8px 'Liberation Sans', sans-serif;line-height:1;color:#000;-webkit-text-stroke:0.2px #000;left:843.48px;top:414.7px;transform:scaleX(1.0415);">Индекс температуры застывания</span>
<span class="t" style="font:400 16.8px 'Liberation Sans', sans-serif;line-height:1;color:#000;-webkit-text-stroke:0.2px #000;left:74.75px;top:440.7px;transform:scaleX(0.9168);">POR</span>
<span class="t" style="font:400 16.8px 'Liberation Sans', sans-serif;line-height:1;color:#000;-webkit-text-stroke:0.2px #000;left:166.40px;top:440.7px;transform:scaleX(0.9990);">ЛОЖЬ</span>
<span class="t" style="font:400 16.8px 'Liberation Sans', sans-serif;line-height:1;color:#000;-webkit-text-stroke:0.2px #000;left:266.82px;top:440.7px;transform:scaleX(0.9031);">PPI</span>
<span class="t" style="font:400 16.8px 'Liberation Sans', sans-serif;line-height:1;color:#000;-webkit-text-stroke:0.2px #000;left:347.88px;top:440.7px;transform:scaleX(0.9765);">ИСТИНА</span>
<span class="t" style="font:400 16.8px 'Liberation Sans', sans-serif;line-height:1;color:#000;-webkit-text-stroke:0.2px #000;left:445.01px;top:440.7px;transform:scaleX(1.0283);">Pow(2.71828, ((73.0883+Ln(PPI))/12.885))-460</span>
<span class="t" style="font:italic 400 16.8px 'Liberation Sans', sans-serif;line-height:1;color:#000;-webkit-text-stroke:0.2px #000;left:843.65px;top:440.7px;transform:scaleX(1.0335);">Температура застывания (Pour point)</span>
<span class="t" style="font:400 16.8px 'Liberation Sans', sans-serif;line-height:1;color:#000;-webkit-text-stroke:0.2px #000;left:80.60px;top:466.7px;transform:scaleX(0.9163);">FLI</span>
<span class="t" style="font:400 16.8px 'Liberation Sans', sans-serif;line-height:1;color:#000;-webkit-text-stroke:0.2px #000;left:156.58px;top:466.7px;transform:scaleX(0.9765);">ИСТИНА</span>
<span class="t" style="font:400 16.8px 'Liberation Sans', sans-serif;line-height:1;color:#000;-webkit-text-stroke:0.2px #000;left:265.64px;top:466.7px;transform:scaleX(0.8487);">FLS</span>
<span class="t" style="font:400 16.8px 'Liberation Sans', sans-serif;line-height:1;color:#000;-webkit-text-stroke:0.2px #000;left:357.70px;top:466.7px;transform:scaleX(0.9990);">ЛОЖЬ</span>
<span class="t" style="font:400 16.8px 'Liberation Sans', sans-serif;line-height:1;color:#000;-webkit-text-stroke:0.2px #000;left:445.05px;top:466.7px;transform:scaleX(1.0007);">Pow(10, 42.1093 -14.286*Lg(FLS + 460))</span>
<span class="t" style="font:italic 400 16.8px 'Liberation Sans', sans-serif;line-height:1;color:#000;-webkit-text-stroke:0.2px #000;left:843.48px;top:466.7px;transform:scaleX(1.0382);">Индекс температуры вспышки (Flash point)</span>
<span class="t" style="font:400 16.8px 'Liberation Sans', sans-serif;line-height:1;color:#000;-webkit-text-stroke:0.2px #000;left:78.34px;top:492.7px;transform:scaleX(0.8487);">FLS</span>
<span class="t" style="font:400 16.8px 'Liberation Sans', sans-serif;line-height:1;color:#000;-webkit-text-stroke:0.2px #000;left:166.40px;top:492.7px;transform:scaleX(0.9990);">ЛОЖЬ</span>
<span class="t" style="font:400 16.8px 'Liberation Sans', sans-serif;line-height:1;color:#000;-webkit-text-stroke:0.2px #000;left:267.90px;top:492.7px;transform:scaleX(0.9163);">FLI</span>
<span class="t" style="font:400 16.8px 'Liberation Sans', sans-serif;line-height:1;color:#000;-webkit-text-stroke:0.2px #000;left:357.70px;top:492.7px;transform:scaleX(0.9990);">ЛОЖЬ</span>
<span class="t" style="font:400 16.8px 'Liberation Sans', sans-serif;line-height:1;color:#000;-webkit-text-stroke:0.2px #000;left:445.03px;top:492.7px;transform:scaleX(1.0160);">Pow(10, (42.1093 - Lg(FLI)) / 14.286)-460</span>
<span class="t" style="font:italic 400 16.8px 'Liberation Sans', sans-serif;line-height:1;color:#000;-webkit-text-stroke:0.2px #000;left:843.65px;top:492.7px;transform:scaleX(1.0335);">Температура вспышки (Flash point)</span>
<span class="t" style="font:400 16.8px 'Liberation Sans', sans-serif;line-height:1;color:#000;-webkit-text-stroke:0.2px #000;left:79.91px;top:518.7px;transform:scaleX(0.9263);">CLI</span>
<span class="t" style="font:400 16.8px 'Liberation Sans', sans-serif;line-height:1;color:#000;-webkit-text-stroke:0.2px #000;left:156.58px;top:518.7px;transform:scaleX(0.9765);">ИСТИНА</span>
<span class="t" style="font:400 16.8px 'Liberation Sans', sans-serif;line-height:1;color:#000;-webkit-text-stroke:0.2px #000;left:263.77px;top:518.7px;transform:scaleX(0.9031);">CLD</span>
<span class="t" style="font:400 16.8px 'Liberation Sans', sans-serif;line-height:1;color:#000;-webkit-text-stroke:0.2px #000;left:347.88px;top:518.7px;transform:scaleX(0.9765);">ИСТИНА</span>
<span class="t" style="font:400 16.8px 'Liberation Sans', sans-serif;line-height:1;color:#000;-webkit-text-stroke:0.2px #000;left:445.02px;top:518.7px;transform:scaleX(1.0219);">Pow((0.0026415*(CLD+460)), 20)</span>
<span class="t" style="font:italic 400 16.8px 'Liberation Sans', sans-serif;line-height:1;color:#000;-webkit-text-stroke:0.2px #000;left:843.48px;top:518.7px;transform:scaleX(1.0423);">Индекс температуры помутнения (Cloud point)</span>
<span class="t" style="font:400 16.8px 'Liberation Sans', sans-serif;line-height:1;color:#000;-webkit-text-stroke:0.2px #000;left:76.47px;top:544.7px;transform:scaleX(0.9031);">CLD</span>
<span class="t" style="font:400 16.8px 'Liberation Sans', sans-serif;line-height:1;color:#000;-webkit-text-stroke:0.2px #000;left:166.40px;top:544.7px;transform:scaleX(0.9990);">ЛОЖЬ</span>
<span class="t" style="font:400 16.8px 'Liberation Sans', sans-serif;line-height:1;color:#000;-webkit-text-stroke:0.2px #000;left:267.21px;top:544.7px;transform:scaleX(0.9263);">CLI</span>
<span class="t" style="font:400 16.8px 'Liberation Sans', sans-serif;line-height:1;color:#000;-webkit-text-stroke:0.2px #000;left:347.88px;top:544.7px;transform:scaleX(0.9765);">ИСТИНА</span>
<span class="t" style="font:400 16.8px 'Liberation Sans', sans-serif;line-height:1;color:#000;-webkit-text-stroke:0.2px #000;left:445.48px;top:544.7px;transform:scaleX(1.0230);">(Pow(CLI, 0.05)/0.0026415)-460</span>
<span class="t" style="font:italic 400 16.8px 'Liberation Sans', sans-serif;line-height:1;color:#000;-webkit-text-stroke:0.2px #000;left:843.64px;top:544.7px;transform:scaleX(1.0381);">Температура помутнения (Cloud point)</span>
<span class="t" style="font:400 16.8px 'Liberation Sans', sans-serif;line-height:1;color:#000;-webkit-text-stroke:0.2px #000;left:79.60px;top:570.7px;transform:scaleX(0.8969);">FRI</span>
<span class="t" style="font:400 16.8px 'Liberation Sans', sans-serif;line-height:1;color:#000;-webkit-text-stroke:0.2px #000;left:156.58px;top:570.7px;transform:scaleX(0.9765);">ИСТИНА</span>
<span class="t" style="font:400 16.8px 'Liberation Sans', sans-serif;line-height:1;color:#000;-webkit-text-stroke:0.2px #000;left:264.06px;top:570.7px;transform:scaleX(0.8730);">FRP</span>
<span class="t" style="font:400 16.8px 'Liberation Sans', sans-serif;line-height:1;color:#000;-webkit-text-stroke:0.2px #000;left:347.88px;top:570.7px;transform:scaleX(0.9765);">ИСТИНА</span>
<span class="t" style="font:400 16.8px 'Liberation Sans', sans-serif;line-height:1;color:#000;-webkit-text-stroke:0.2px #000;left:445.03px;top:570.7px;transform:scaleX(1.0173);">Pow(2.71828, (12.8852*Ln(FRP+460)-73.0883))</span>
<span class="t" style="font:italic 400 16.8px 'Liberation Sans', sans-serif;line-height:1;color:#000;-webkit-text-stroke:0.2px #000;left:843.48px;top:570.7px;transform:scaleX(1.0340);">Индекс температуры начала кристаллизации (Freese point)</span>
<span class="t" style="font:400 16.8px 'Liberation Sans', sans-serif;line-height:1;color:#000;-webkit-text-stroke:0.2px #000;left:76.76px;top:596.7px;transform:scaleX(0.8730);">FRP</span>
<span class="t" style="font:400 16.8px 'Liberation Sans', sans-serif;line-height:1;color:#000;-webkit-text-stroke:0.2px #000;left:166.40px;top:596.7px;transform:scaleX(0.9990);">ЛОЖЬ</span>
<span class="t" style="font:400 16.8px 'Liberation Sans', sans-serif;line-height:1;color:#000;-webkit-text-stroke:0.2px #000;left:266.90px;top:596.7px;transform:scaleX(0.8969);">FRI</span>
<span class="t" style="font:400 16.8px 'Liberation Sans', sans-serif;line-height:1;color:#000;-webkit-text-stroke:0.2px #000;left:347.88px;top:596.7px;transform:scaleX(0.9765);">ИСТИНА</span>
<span class="t" style="font:400 16.8px 'Liberation Sans', sans-serif;line-height:1;color:#000;-webkit-text-stroke:0.2px #000;left:445.01px;top:596.7px;transform:scaleX(1.0283);">Pow(2.71828, ((73.0883+Ln(FRI))/12.885))-460</span>
<span class="t" style="font:italic 400 16.8px 'Liberation Sans', sans-serif;line-height:1;color:#000;-webkit-text-stroke:0.2px #000;left:843.65px;top:596.7px;transform:scaleX(1.0318);">Температура начала кристаллизации (Freese point)</span>
<span class="t" style="font:400 16.8px 'Liberation Sans', sans-serif;line-height:1;color:#000;-webkit-text-stroke:0.2px #000;left:76.68px;top:622.7px;transform:scaleX(1.0291);">SMI</span>
<span class="t" style="font:400 16.8px 'Liberation Sans', sans-serif;line-height:1;color:#000;-webkit-text-stroke:0.2px #000;left:156.58px;top:622.7px;transform:scaleX(0.9765);">ИСТИНА</span>
<span class="t" style="font:400 16.8px 'Liberation Sans', sans-serif;line-height:1;color:#000;-webkit-text-stroke:0.2px #000;left:261.54px;top:622.7px;transform:scaleX(0.9447);">SMK</span>
<span class="t" style="font:400 16.8px 'Liberation Sans', sans-serif;line-height:1;color:#000;-webkit-text-stroke:0.2px #000;left:357.70px;top:622.7px;transform:scaleX(0.9990);">ЛОЖЬ</span>
<span class="t" style="font:400 16.8px 'Liberation Sans', sans-serif;line-height:1;color:#000;-webkit-text-stroke:0.2px #000;left:445.73px;top:622.7px;transform:scaleX(1.0154);">1/SMK</span>
<span class="t" style="font:italic 400 16.8px 'Liberation Sans', sans-serif;line-height:1;color:#000;-webkit-text-stroke:0.2px #000;left:843.48px;top:622.7px;transform:scaleX(1.0322);">Индекс высоты некоптящего пламени (Smoke point)</span>
<span class="t" style="font:400 16.8px 'Liberation Sans', sans-serif;line-height:1;color:#000;-webkit-text-stroke:0.2px #000;left:74.24px;top:648.7px;transform:scaleX(0.9447);">SMK</span>
<span class="t" style="font:400 16.8px 'Liberation Sans', sans-serif;line-height:1;color:#000;-webkit-text-stroke:0.2px #000;left:166.40px;top:648.7px;transform:scaleX(0.9990);">ЛОЖЬ</span>
<span class="t" style="font:400 16.8px 'Liberation Sans', sans-serif;line-height:1;color:#000;-webkit-text-stroke:0.2px #000;left:263.98px;top:648.7px;transform:scaleX(1.0291);">SMI</span>
<span class="t" style="font:400 16.8px 'Liberation Sans', sans-serif;line-height:1;color:#000;-webkit-text-stroke:0.2px #000;left:357.70px;top:648.7px;transform:scaleX(0.9990);">ЛОЖЬ</span>
<span class="t" style="font:400 16.8px 'Liberation Sans', sans-serif;line-height:1;color:#000;-webkit-text-stroke:0.2px #000;left:445.64px;top:648.7px;transform:scaleX(1.0854);">1/SMI</span>
<span class="t" style="font:italic 400 16.8px 'Liberation Sans', sans-serif;line-height:1;color:#000;-webkit-text-stroke:0.2px #000;left:843.48px;top:648.7px;transform:scaleX(1.0301);">Высота некоптящего пламени (Smoke point), мм</span>
<span class="t" style="font:400 16.8px 'Liberation Sans', sans-serif;line-height:1;color:#000;-webkit-text-stroke:0.2px #000;left:1140.41px;top:414.7px;transform:scaleX(1.0904);">(Pour point)</span>
<span class="t" style="font:400 16.8px 'Liberation Sans', sans-serif;line-height:1;color:#999;left:43.73px;top:694px;transform:scaleX(1.0303);">25.01.2026</span>
<span class="t" style="font:400 16.8px 'Liberation Sans', sans-serif;line-height:1;color:#3c4455;left:153.75px;top:694px;transform:scaleX(1.0080);">© 2016-2018 Aleph.Soft LLC © 1977-2025 П.А. Шлепаков</span>
<a class="t" style="font:400 24px 'DejaVu Sans', sans-serif;line-height:1;color:#0563c1;left:619.30px;top:687px;transform:scaleX(0.9875);">Типовое решение</a>
<a class="t" style="font:400 26px 'Liberation Sans', sans-serif;line-height:1;color:#0563c1;left:848.04px;top:684.6px;transform:scaleX(1.0338);">VMasutQuStore</a>
<a class="t" style="font:400 26px 'Liberation Sans', sans-serif;line-height:1;color:#0563c1;left:1039.46px;top:684.6px;transform:scaleX(0.9180);">_</a>
<a class="t" style="font:400 26px 'Liberation Sans', sans-serif;line-height:1;color:#0563c1;left:1052.74px;top:684.6px;transform:scaleX(0.8505);">SCH</a>
<a class="t" style="font:400 26px 'Liberation Sans', sans-serif;line-height:1;color:#0563c1;left:1099.06px;top:684.6px;transform:scaleX(1.1148);">_</a>
<a class="t" style="font:400 26px 'Liberation Sans', sans-serif;line-height:1;color:#0563c1;left:1114.50px;top:684.6px;transform:scaleX(0.9524);">LP60</a>
<span class="t" style="font:700 42.6px 'Liberation Sans', sans-serif;line-height:1;color:#767171;left:1186.96px;top:680.4px;transform-origin:0 36.00px;transform:scale(1.0282,1.05);">90</span>
<div style="left:324px;top:324px;width:114px;height:38.7px;box-sizing:border-box;border:6px solid #ffff00;border-radius:14px"></div>
</div></body></html>
